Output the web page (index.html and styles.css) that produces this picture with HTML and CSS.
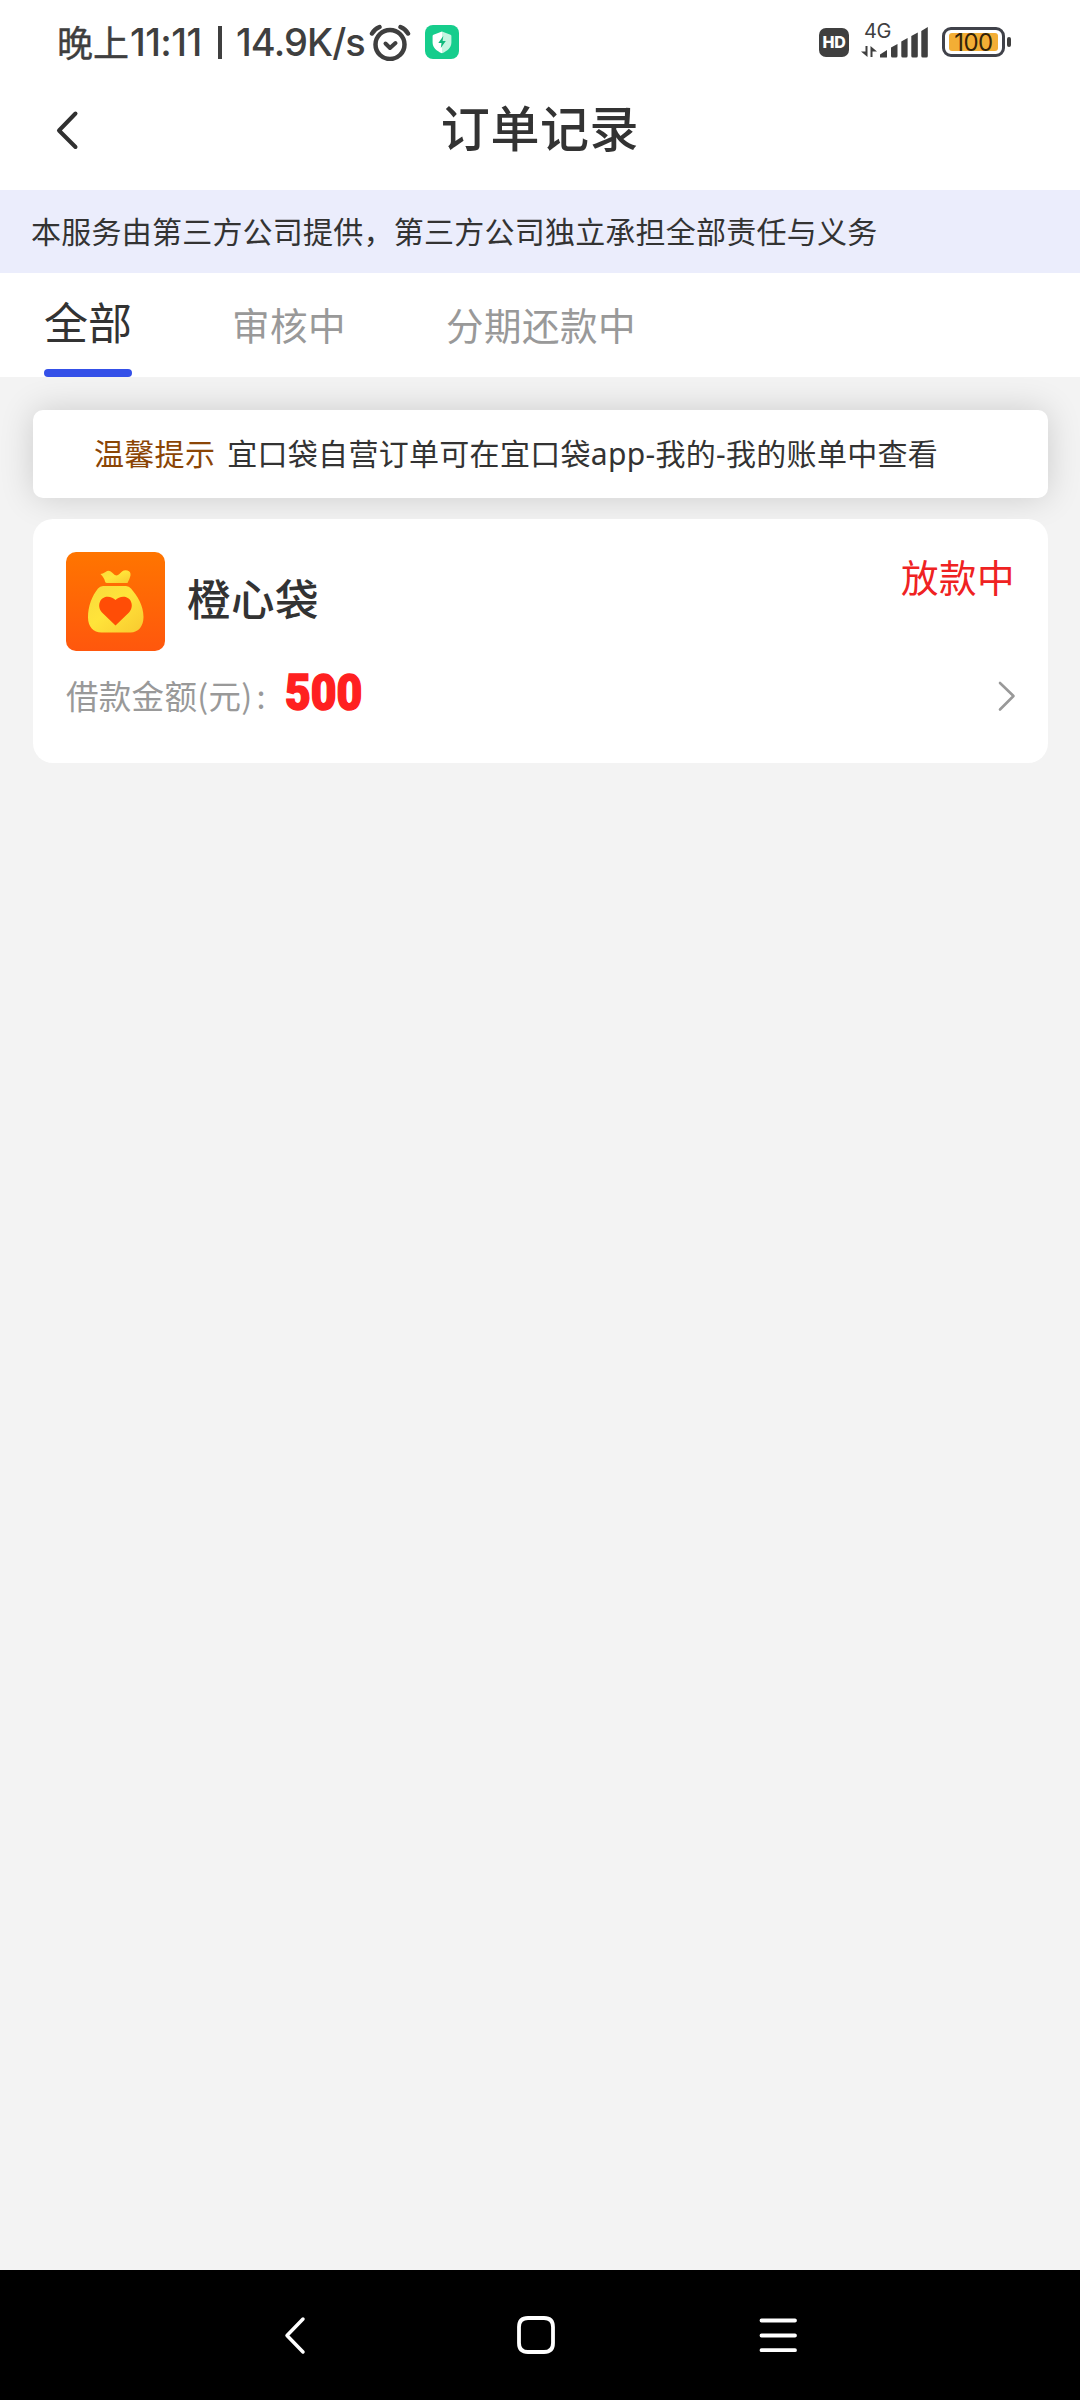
FILE: index.html
```html
<!DOCTYPE html>
<html lang="zh-CN">
<head>
    <meta charset="UTF-8">
    <meta name="viewport" content="width=device-width, initial-scale=1.0">
    <title>订单记录</title>
    <link rel="stylesheet" href="styles.css">
</head>
<body>
    <div class="status-bar">
        <div class="status-left">
            <span class="status-cn">晚上</span>
            <span class="status-time">11:11</span>
            <span class="status-sep"></span>
            <span class="status-speed">14.9K/s</span>
            <svg class="alarm-icon" width="42" height="38" viewBox="0 0 42 38" fill="none" stroke="#3f3f3f" stroke-linecap="round" stroke-linejoin="round">
                <circle cx="21" cy="21.5" r="14.5" stroke-width="4.500"/>
                <path d="M16.5 20.5l4.5 4.5 5.5-5" stroke-width="4"/>
                <path d="M3 10.500q2.500-4.500 7.500-6.500M39 10.500q-2.500-4.500-7.500-6.500" stroke-width="4.500"/>
            </svg>
            <svg class="shield-icon" width="34" height="34" viewBox="0 0 34 34">
                <rect width="34" height="34" rx="8" fill="#16cd8c"/>
                <path d="M17 6.500l8.500 3.200c.6.200.9.700.9 1.300v6.500c0 5-4 8.500-9.400 10.800z" fill="#c4f5e1"/>
                <path d="M17 6.500l-8.500 3.200c-.6.200-.9.700-.9 1.300v6.500c0 5 4 8.500 9.400 10.800z" fill="#fff"/>
                <path d="M18.300 11l-5 7h3.200l-.7 5 5-7h-3.200z" fill="#0fb97c"/>
            </svg>
        </div>
        <div class="status-right">
            <span class="hd">HD</span>
            <div class="signal">
                <span class="network">4G</span>
                <svg width="68" height="32" viewBox="0 0 68 32" fill="#3f3f3f">
                    <path d="M4.500 20h2v11L0 25.500h4.500zM9.500 31V20l6.500 5.500h-4.500V31z"/>
                    <path d="M19 31v-2.500l7-4.500v7q0 .5-.5.500h-6q-.5 0-.5-.5zM30 21.500l6.500-3.500v12q0 1.500-1.500 1.500h-3.500q-1.500 0-1.500-1.500zM40.300 15.500l6.300-3.500v18q0 1.500-1.500 1.500h-3.300q-1.500 0-1.500-1.500zM50.300 10l6.500-3.500v23.500q0 1.500-1.500 1.500h-3.500q-1.500 0-1.500-1.500zM60.300 5l6.500-4v29q0 1.500-1.500 1.500h-3.500q-1.500 0-1.500-1.500z"/>
                </svg>
            </div>
            <div class="battery"><span class="battery-fill">100</span></div>
            <span class="battery-cap"></span>
        </div>
    </div>

    <header class="header">
        <svg class="back-icon" width="24" height="40" viewBox="0 0 24 40" fill="none" stroke="#303030" stroke-width="4" stroke-linecap="round" stroke-linejoin="round">
            <path d="M20.500 3.500L4 20.500l16.500 16.500"/>
        </svg>
        <h1>订单记录</h1>
    </header>

    <div class="notice">本服务由第三方公司提供，第三方公司独立承担全部责任与义务</div>

    <nav class="tabs">
        <span class="tab active">全部</span>
        <span class="tab">审核中</span>
        <span class="tab">分期还款中</span>
    </nav>

    <main class="content">
        <div class="tip">
            <span class="tip-label">温馨提示</span>
            <span>宜口袋自营订单可在宜口袋<span class="latin">app-</span>我的<span class="latin">-</span>我的账单中查看</span>
        </div>

        <div class="order">
            <div class="order-top">
                <svg class="logo" width="99" height="99" viewBox="0 0 99 99">
                    <defs>
                        <linearGradient id="logoBg" x1="0" y1="0" x2="0" y2="1">
                            <stop offset="0" stop-color="#ff7500"/>
                            <stop offset="1" stop-color="#ff570d"/>
                        </linearGradient>
                        <linearGradient id="bag" x1="0" y1="0" x2="1" y2="1">
                            <stop offset="0" stop-color="#f8da3c"/>
                            <stop offset=".45" stop-color="#ffe43a"/>
                            <stop offset="1" stop-color="#f8c92f"/>
                        </linearGradient>
                    </defs>
                    <rect width="99" height="99" rx="10" fill="url(#logoBg)"/>
                    <path d="M34.500 22q2 0 5-2 3.500-2.500 6.500.5 3.500 4 6 2.500 1.500-1 4-3.500 2.500-2 5.500-1 3.500 1 3 5-.5 2.500-3 7.500H41q-1.500 0-2-1.500-.5-3.500-4.500-7.500z" fill="url(#bag)"/>
                    <path d="M37 34h23q3 0 5 2.500C71.500 44 77.500 53.500 77.500 65c0 9-5 15.500-13 15.500h-29c-8 0-13.500-6-13.500-15C22 54 26 44 32 36.500q2-2.500 5-2.500z" fill="url(#bag)"/>
                    <path d="M49.500 73.500L36 60.500c-4-4.500-3.500-10.500 0-13.800 4-3.500 10.500-2.200 13.500 1.300 3-3.500 9.500-4.800 13.500-1.300 3.500 3.300 4 9.300 0 13.800z" fill="#ff4d06"/>
                </svg>
                <span class="order-name">橙心袋</span>
                <span class="order-status">放款中</span>
            </div>
            <div class="order-bottom">
                <span class="amount-label">借款金额(元)<span class="colon">:</span></span>
                <span class="amount">500</span>
                <svg class="arrow" width="20" height="32" viewBox="0 0 20 32" fill="none" stroke="#999" stroke-width="2.600" stroke-linecap="round" stroke-linejoin="round">
                    <path d="M3 3l13.500 13L3 29.500"/>
                </svg>
            </div>
        </div>
    </main>

    <footer class="nav-bar">
        <svg width="24" height="40" viewBox="0 0 24 40" fill="none" stroke="#fff" stroke-width="3.500" stroke-linecap="round" stroke-linejoin="round">
            <path d="M20 4L4 20.500 20 37"/>
        </svg>
        <svg class="home-icon" width="40" height="40" viewBox="0 0 40 40" fill="none" stroke="#fff" stroke-width="3.800">
            <path d="M12 3h16q9 0 9 9v16q0 9-9 9H12q-9 0-9-9V12q0-9 9-9z"/>
        </svg>
        <svg width="40" height="40" viewBox="0 0 40 40" stroke="#fff" stroke-width="3.800" stroke-linecap="round">
            <path d="M3.500 5.500h33.500M3.500 20.500h33.500M3.500 35.200h33.500"/>
        </svg>
    </footer>
</body>
</html>
```
FILE: styles.css
```css
* {
    box-sizing: border-box;
}

body {
    margin: 0;
    width: 1080px;
    height: 2400px;
    display: flex;
    flex-direction: column;
    background: #f3f3f3;
    color: #333;
    font-family: "Noto Sans CJK SC", sans-serif;
    white-space: nowrap;
}

svg {
    display: block;
    flex-shrink: 0;
}

/* Status bar */
.status-bar {
    height: 84px;
    padding: 0 69px 0 57px;
    display: flex;
    justify-content: space-between;
    background: #fff;
    color: #3f3f3f;
}

.status-left,
.status-right {
    display: flex;
    align-items: center;
    height: 84px;
}

.status-cn {
    width: 73px;
    padding-bottom: 3px;
    font-size: 36px;
    font-weight: 400;
    -webkit-text-stroke: 0.4px #3f3f3f;
}

.status-time,
.status-speed {
    font-family: Inter, sans-serif;
    font-size: 38px;
    font-weight: 450;
    letter-spacing: -0.6px;
}

.status-time {
    width: 88px;
}

.status-sep {
    width: 4px;
    height: 33px;
    margin-right: 14px;
    background: #3f3f3f;
}

.status-speed {
    width: 133px;
    letter-spacing: -0.9px;
}

.shield-icon {
    margin-left: 14px;
}

.hd {
    width: 30px;
    height: 29px;
    border-radius: 7px;
    background: #3f3f3f;
    color: #fff;
    font: 800 16px/29px Inter, sans-serif;
    letter-spacing: -0.3px;
    text-align: center;
}

.signal {
    position: relative;
    margin-left: 12px;
}

.network {
    position: absolute;
    left: 3px;
    top: -6px;
    font: 400 20px/22px Inter, sans-serif;
    letter-spacing: -0.5px;
}

.battery {
    width: 63px;
    height: 30px;
    margin-left: 13px;
    padding: 3px 4px;
    border: 3px solid #40424a;
    border-radius: 9px;
}

.battery-fill {
    display: block;
    height: 18px;
    border-radius: 3px;
    background: #f3ae35;
    color: #33230b;
    font: 400 24px/19px Inter, sans-serif;
    letter-spacing: -0.5px;
    text-align: center;
}

.battery-cap {
    width: 4px;
    height: 10px;
    margin-left: 2px;
    border-radius: 2px;
    background: #3f3f3f;
}

/* Page header */
.header {
    height: 106px;
    display: grid;
    grid-template-columns: 160px 1fr 160px;
    background: #fff;
}

.back-icon {
    margin: 26px 0 0 55px;
}

.header h1 {
    margin: 0;
    font-size: 49px;
    line-height: 83px;
    font-weight: 500;
    letter-spacing: 0.6px;
    text-align: center;
}

.notice {
    height: 83px;
    padding-left: 31px;
    background: #ebedfc;
    font-size: 30px;
    line-height: 80px;
    letter-spacing: 0.23px;
}

.tabs {
    height: 104px;
    padding-left: 44px;
    display: flex;
    background: #fff;
}

.tab {
    margin-right: 100px;
    color: #999;
    font-size: 37.500px;
    line-height: 102px;
    letter-spacing: 0.5px;
}

.tab.active {
    display: flex;
    flex-direction: column;
    width: 88px;
    color: #333;
    font-size: 44px;
    line-height: 96px;
    letter-spacing: 0;
}

.tab.active::after {
    content: "";
    height: 8px;
    border-radius: 4px;
    background: #3450e8;
}

/* Orders */
.content {
    flex: 1;
    padding: 33px 32px 0 33px;
}

.tip {
    height: 88px;
    padding-left: 61px;
    border-radius: 10px;
    background: #fff;
    box-shadow: 0 0 34px rgba(0, 0, 0, 0.16);
    font-size: 30px;
    line-height: 84px;
    letter-spacing: 0.3px;
    display: flex;
    gap: 12px;
}

.tip-label {
    color: #8b4505;
}

.latin {
    font-family: "Noto Sans", sans-serif;
}

.order {
    height: 244px;
    margin-top: 21px;
    padding: 33px 33px 0;
    border-radius: 20px;
    background: #fff;
}

.order-top {
    display: flex;
    align-items: center;
    height: 99px;
}

.order-name {
    margin-left: 22px;
    padding-bottom: 8px;
    font-size: 43.500px;
    font-weight: 500;
    letter-spacing: 0.5px;
}

.order-status {
    align-self: flex-start;
    margin-left: auto;
    color: #ef2222;
    font-size: 37.500px;
    line-height: 48px;
    letter-spacing: 0.5px;
}

.order-bottom {
    display: flex;
    align-items: center;
    height: 90px;
}

.amount-label {
    width: 219px;
    padding-bottom: 3px;
    color: #999;
    font-size: 32.500px;
    letter-spacing: 0.3px;
}

.colon {
    margin-left: 4px;
}

.amount {
    padding-bottom: 6px;
    color: #ff2020;
    font-family: Roboto, sans-serif;
    font-size: 50px;
    font-weight: 900;
    -webkit-text-stroke: 1.5px #ff2020;
    transform: scaleX(0.89);
    transform-origin: left;
}

.arrow {
    margin: 0 -2px 0 auto;
}

/* Android navigation */
.nav-bar {
    height: 130px;
    padding: 0 282px 0 283px;
    display: flex;
    align-items: center;
    justify-content: space-between;
    background: #000;
}

.home-icon {
    margin-left: 7px;
}
```
